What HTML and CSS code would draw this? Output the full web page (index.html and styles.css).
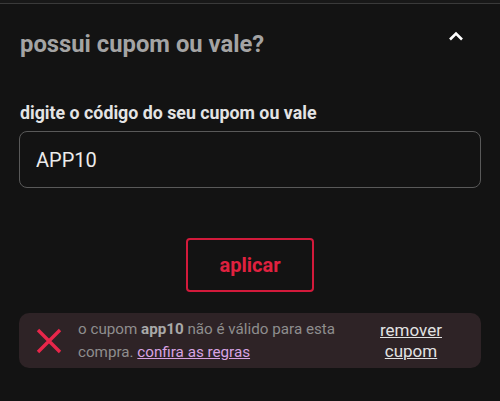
FILE: index.html
```html
<!DOCTYPE html>
<html lang="pt-BR">
<head>
  <meta charset="UTF-8" />
  <meta name="viewport" content="width=device-width, initial-scale=1.0" />
  <title>Cupom</title>
  <link rel="stylesheet" href="styles.css">
</head>
<body>
  <div class="coupon">
    <div class="coupon-header">
      <h2>possui cupom ou vale?</h2>
      <svg class="chevron" width="16" height="10" viewBox="0 0 16 10">
        <polyline points="2,8.5 8,2.5 14,8.5" fill="none" stroke="#fff" stroke-width="2.6" />
      </svg>
    </div>

    <form class="coupon-form">
      <label for="code">digite o código do seu cupom ou vale</label>
      <input type="text" id="code" value="APP10" />
      <button type="button" class="btn">aplicar</button>
    </form>

    <div class="coupon-error">
      <svg class="error-icon" width="26" height="26" viewBox="0 0 26 26">
        <path d="M2 2 L24 24 M24 2 L2 24" stroke="#e8264a" stroke-width="3.4" />
      </svg>
      <p class="error-text">o cupom <b>app10</b> não é válido para esta compra. <a href="#">confira as regras</a></p>
      <a href="#" class="remove">remover cupom</a>
    </div>
  </div>
</body>
</html>
```

FILE: styles.css
```css
* {
  box-sizing: border-box;
}
body {
  font-family: Roboto, 'Liberation Sans', sans-serif;
  margin: 0;
  padding: 0;
  background: #131313;
  color: #e6e6e6;
}
.coupon {
  border-top: 3px solid #181818;
  box-shadow: inset 0 1px 0 #3a3a3a;
  padding: 0 19px;
  min-height: 401px;
}
.coupon-header {
  display: flex;
  justify-content: space-between;
  align-items: flex-start;
  padding-top: 27px;
}
.coupon-header h2 {
  margin: 0 0 0 1px;
  font-size: 23.8px;
  line-height: 28px;
  font-weight: 700;
  color: #a4a4a4;
}
.chevron {
  margin-top: 1px;
  margin-right: 17px;
}
.coupon-form {
  display: flex;
  flex-direction: column;
  margin-top: 44px;
}
.coupon-form label {
  font-size: 17.8px;
  line-height: 22px;
  font-weight: 700;
  color: #e4e4e4;
  margin-left: 1px;
  margin-bottom: 7px;
}
.coupon-form input {
  height: 57px;
  padding: 0 16px;
  border: 1px solid #595959;
  border-radius: 8px;
  background: #131313;
  color: #ececec;
  font-family: inherit;
  font-size: 20px;
  outline: none;
}
.btn {
  align-self: center;
  margin-top: 50px;
  width: 128px;
  height: 54px;
  background: transparent;
  border: 2px solid #d31a3b;
  border-radius: 4px;
  color: #e0213f;
  font-family: inherit;
  font-size: 20px;
  font-weight: 700;
  cursor: pointer;
}
.coupon-error {
  display: flex;
  align-items: center;
  margin-top: 21px;
  height: 55px;
  padding: 0 20px 0 17px;
  background: #2e2326;
  border-radius: 10px;
}
.error-icon {
  flex-shrink: 0;
}
.error-text {
  flex: 1;
  margin: 0 10px 0 16px;
  font-size: 15.2px;
  line-height: 23px;
  color: #8e8e8e;
}
.error-text b {
  color: #a9a9a9;
}
.error-text a {
  color: #d9a3e3;
}
.remove {
  width: 100px;
  text-align: center;
  font-size: 17px;
  line-height: 21px;
  color: #e2e2e2;
}
```
